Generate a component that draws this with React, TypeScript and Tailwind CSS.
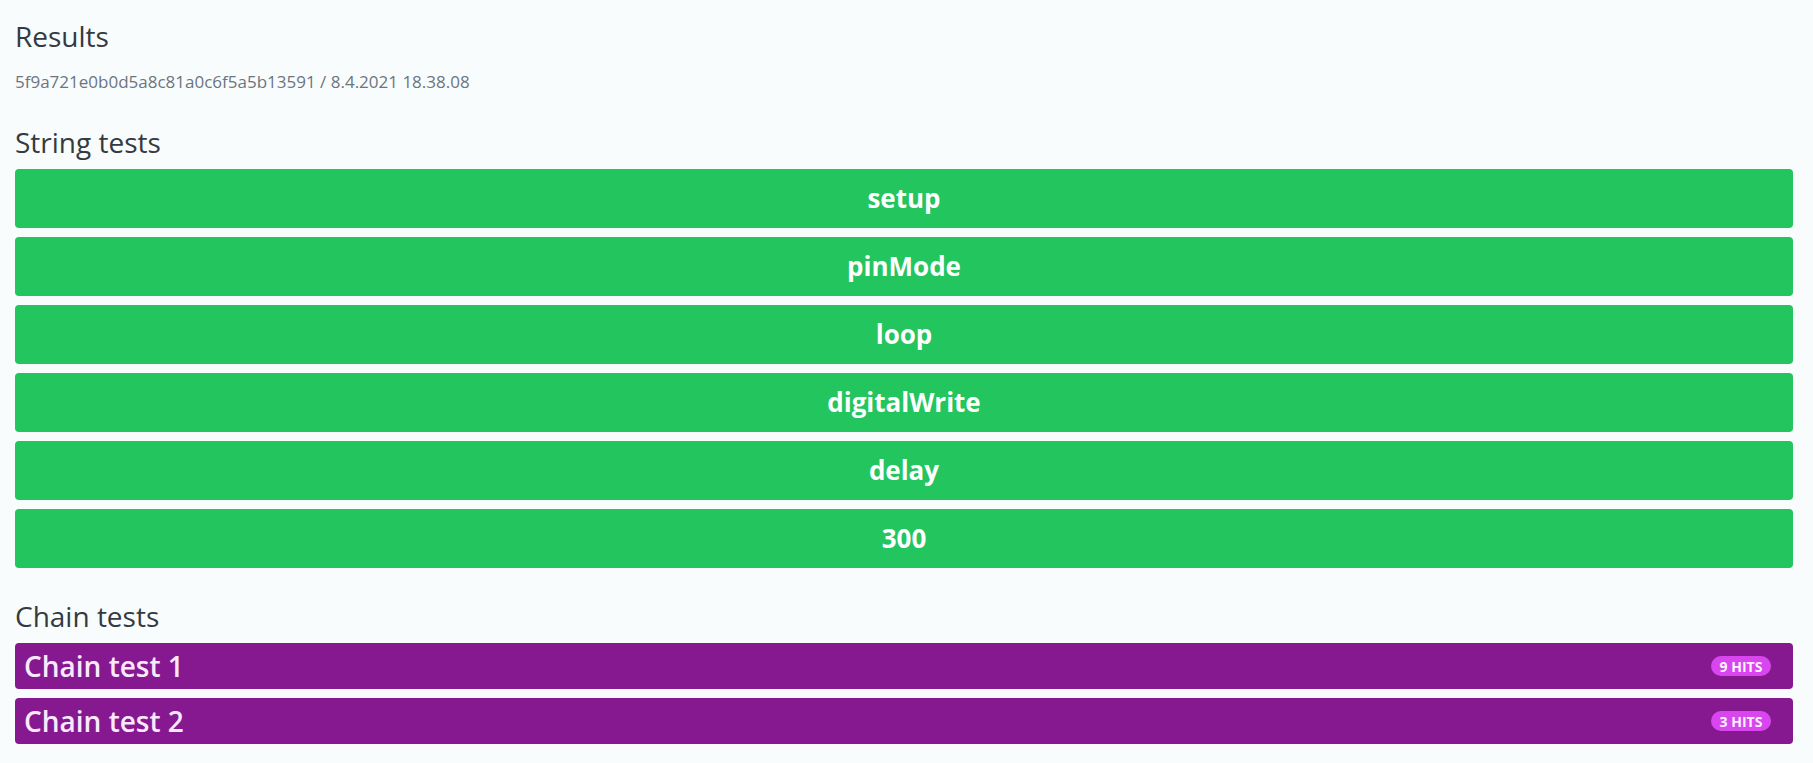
export default function App() {
  const strings = ["setup", "pinMode", "loop", "digitalWrite", "delay", "300"];
  const chains = [
    { name: "Chain test 1", hits: 9 },
    { name: "Chain test 2", hits: 3 },
  ];
  return (
    <div
      className="min-h-[763px] w-full bg-[#f8fcfd] pl-[15px] pr-[20px] pt-[18px] text-[#343a40]"
      style={{ fontFamily: '"Open Sans", "Noto Sans", sans-serif' }}
    >
      <h1 className="text-[28px] leading-[36px] font-normal">Results</h1>
      <div className="mt-[17px] text-[17px] leading-[22px] text-[#6c757d]">
        5f9a721e0b0d5a8c81a0c6f5a5b13591 / 8.4.2021 18.38.08
      </div>
      <h2 className="mt-[31px] text-[28px] leading-[36px] font-normal">String tests</h2>
      <div className="mt-[9px] flex flex-col gap-[9px]">
        {strings.map((s) => (
          <div
            key={s}
            className="flex h-[59px] items-center justify-center rounded-[4px] bg-[#22c55e] text-[26px] font-bold text-white"
          >
            {s}
          </div>
        ))}
      </div>
      <h2 className="mt-[30px] text-[28px] leading-[36px] font-normal">Chain tests</h2>
      <div className="mt-[9px] flex flex-col gap-[9px]">
        {chains.map((c) => (
          <div
            key={c.name}
            className="flex h-[46px] items-center justify-between rounded-[4px] bg-[#86198f] pl-[9px] pr-[22px]"
          >
            <span className="text-[28px] font-semibold text-[#fae8ff]">{c.name}</span>
            <span className="flex h-[20px] w-[60px] items-center justify-center rounded-full bg-[#d946ef] text-[14px] font-bold text-[#fdf4ff]">
              {c.hits} HITS
            </span>
          </div>
        ))}
      </div>
    </div>
  );
}
